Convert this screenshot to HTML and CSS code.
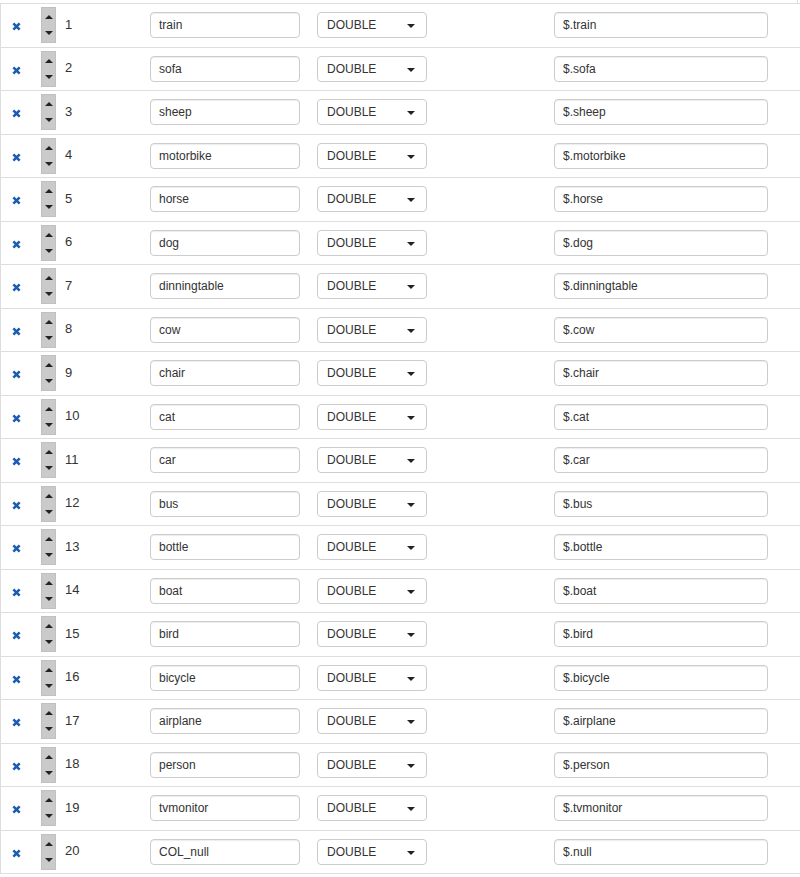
FILE: index.html
```html
<!DOCTYPE html>
<html lang="en">

<head>
    <meta charset="UTF-8">
    <title>Fields</title>
    <link rel="stylesheet" href="styles.css">
</head>

<body>
    <div class="top"></div>
    <div class="fields">
        <div class="row"><span class="del"><svg viewBox="0 0 10 10"><path d="M1.5 1.5L8.5 8.5M8.5 1.5L1.5 8.5"/></svg></span><span class="spin"><i class="up"></i><i class="down"></i></span><span class="num">1</span><span class="cell"><input class="name" value="train"></span><span class="cell"><span class="select">DOUBLE<b class="caret"></b></span></span><span class="cell"><input class="path" value="$.train"></span></div>
        <div class="row"><span class="del"><svg viewBox="0 0 10 10"><path d="M1.5 1.5L8.5 8.5M8.5 1.5L1.5 8.5"/></svg></span><span class="spin"><i class="up"></i><i class="down"></i></span><span class="num">2</span><span class="cell"><input class="name" value="sofa"></span><span class="cell"><span class="select">DOUBLE<b class="caret"></b></span></span><span class="cell"><input class="path" value="$.sofa"></span></div>
        <div class="row"><span class="del"><svg viewBox="0 0 10 10"><path d="M1.5 1.5L8.5 8.5M8.5 1.5L1.5 8.5"/></svg></span><span class="spin"><i class="up"></i><i class="down"></i></span><span class="num">3</span><span class="cell"><input class="name" value="sheep"></span><span class="cell"><span class="select">DOUBLE<b class="caret"></b></span></span><span class="cell"><input class="path" value="$.sheep"></span></div>
        <div class="row"><span class="del"><svg viewBox="0 0 10 10"><path d="M1.5 1.5L8.5 8.5M8.5 1.5L1.5 8.5"/></svg></span><span class="spin"><i class="up"></i><i class="down"></i></span><span class="num">4</span><span class="cell"><input class="name" value="motorbike"></span><span class="cell"><span class="select">DOUBLE<b class="caret"></b></span></span><span class="cell"><input class="path" value="$.motorbike"></span></div>
        <div class="row"><span class="del"><svg viewBox="0 0 10 10"><path d="M1.5 1.5L8.5 8.5M8.5 1.5L1.5 8.5"/></svg></span><span class="spin"><i class="up"></i><i class="down"></i></span><span class="num">5</span><span class="cell"><input class="name" value="horse"></span><span class="cell"><span class="select">DOUBLE<b class="caret"></b></span></span><span class="cell"><input class="path" value="$.horse"></span></div>
        <div class="row"><span class="del"><svg viewBox="0 0 10 10"><path d="M1.5 1.5L8.5 8.5M8.5 1.5L1.5 8.5"/></svg></span><span class="spin"><i class="up"></i><i class="down"></i></span><span class="num">6</span><span class="cell"><input class="name" value="dog"></span><span class="cell"><span class="select">DOUBLE<b class="caret"></b></span></span><span class="cell"><input class="path" value="$.dog"></span></div>
        <div class="row"><span class="del"><svg viewBox="0 0 10 10"><path d="M1.5 1.5L8.5 8.5M8.5 1.5L1.5 8.5"/></svg></span><span class="spin"><i class="up"></i><i class="down"></i></span><span class="num">7</span><span class="cell"><input class="name" value="dinningtable"></span><span class="cell"><span class="select">DOUBLE<b class="caret"></b></span></span><span class="cell"><input class="path" value="$.dinningtable"></span></div>
        <div class="row"><span class="del"><svg viewBox="0 0 10 10"><path d="M1.5 1.5L8.5 8.5M8.5 1.5L1.5 8.5"/></svg></span><span class="spin"><i class="up"></i><i class="down"></i></span><span class="num">8</span><span class="cell"><input class="name" value="cow"></span><span class="cell"><span class="select">DOUBLE<b class="caret"></b></span></span><span class="cell"><input class="path" value="$.cow"></span></div>
        <div class="row"><span class="del"><svg viewBox="0 0 10 10"><path d="M1.5 1.5L8.5 8.5M8.5 1.5L1.5 8.5"/></svg></span><span class="spin"><i class="up"></i><i class="down"></i></span><span class="num">9</span><span class="cell"><input class="name" value="chair"></span><span class="cell"><span class="select">DOUBLE<b class="caret"></b></span></span><span class="cell"><input class="path" value="$.chair"></span></div>
        <div class="row"><span class="del"><svg viewBox="0 0 10 10"><path d="M1.5 1.5L8.5 8.5M8.5 1.5L1.5 8.5"/></svg></span><span class="spin"><i class="up"></i><i class="down"></i></span><span class="num">10</span><span class="cell"><input class="name" value="cat"></span><span class="cell"><span class="select">DOUBLE<b class="caret"></b></span></span><span class="cell"><input class="path" value="$.cat"></span></div>
        <div class="row"><span class="del"><svg viewBox="0 0 10 10"><path d="M1.5 1.5L8.5 8.5M8.5 1.5L1.5 8.5"/></svg></span><span class="spin"><i class="up"></i><i class="down"></i></span><span class="num">11</span><span class="cell"><input class="name" value="car"></span><span class="cell"><span class="select">DOUBLE<b class="caret"></b></span></span><span class="cell"><input class="path" value="$.car"></span></div>
        <div class="row"><span class="del"><svg viewBox="0 0 10 10"><path d="M1.5 1.5L8.5 8.5M8.5 1.5L1.5 8.5"/></svg></span><span class="spin"><i class="up"></i><i class="down"></i></span><span class="num">12</span><span class="cell"><input class="name" value="bus"></span><span class="cell"><span class="select">DOUBLE<b class="caret"></b></span></span><span class="cell"><input class="path" value="$.bus"></span></div>
        <div class="row"><span class="del"><svg viewBox="0 0 10 10"><path d="M1.5 1.5L8.5 8.5M8.5 1.5L1.5 8.5"/></svg></span><span class="spin"><i class="up"></i><i class="down"></i></span><span class="num">13</span><span class="cell"><input class="name" value="bottle"></span><span class="cell"><span class="select">DOUBLE<b class="caret"></b></span></span><span class="cell"><input class="path" value="$.bottle"></span></div>
        <div class="row"><span class="del"><svg viewBox="0 0 10 10"><path d="M1.5 1.5L8.5 8.5M8.5 1.5L1.5 8.5"/></svg></span><span class="spin"><i class="up"></i><i class="down"></i></span><span class="num">14</span><span class="cell"><input class="name" value="boat"></span><span class="cell"><span class="select">DOUBLE<b class="caret"></b></span></span><span class="cell"><input class="path" value="$.boat"></span></div>
        <div class="row"><span class="del"><svg viewBox="0 0 10 10"><path d="M1.5 1.5L8.5 8.5M8.5 1.5L1.5 8.5"/></svg></span><span class="spin"><i class="up"></i><i class="down"></i></span><span class="num">15</span><span class="cell"><input class="name" value="bird"></span><span class="cell"><span class="select">DOUBLE<b class="caret"></b></span></span><span class="cell"><input class="path" value="$.bird"></span></div>
        <div class="row"><span class="del"><svg viewBox="0 0 10 10"><path d="M1.5 1.5L8.5 8.5M8.5 1.5L1.5 8.5"/></svg></span><span class="spin"><i class="up"></i><i class="down"></i></span><span class="num">16</span><span class="cell"><input class="name" value="bicycle"></span><span class="cell"><span class="select">DOUBLE<b class="caret"></b></span></span><span class="cell"><input class="path" value="$.bicycle"></span></div>
        <div class="row"><span class="del"><svg viewBox="0 0 10 10"><path d="M1.5 1.5L8.5 8.5M8.5 1.5L1.5 8.5"/></svg></span><span class="spin"><i class="up"></i><i class="down"></i></span><span class="num">17</span><span class="cell"><input class="name" value="airplane"></span><span class="cell"><span class="select">DOUBLE<b class="caret"></b></span></span><span class="cell"><input class="path" value="$.airplane"></span></div>
        <div class="row"><span class="del"><svg viewBox="0 0 10 10"><path d="M1.5 1.5L8.5 8.5M8.5 1.5L1.5 8.5"/></svg></span><span class="spin"><i class="up"></i><i class="down"></i></span><span class="num">18</span><span class="cell"><input class="name" value="person"></span><span class="cell"><span class="select">DOUBLE<b class="caret"></b></span></span><span class="cell"><input class="path" value="$.person"></span></div>
        <div class="row"><span class="del"><svg viewBox="0 0 10 10"><path d="M1.5 1.5L8.5 8.5M8.5 1.5L1.5 8.5"/></svg></span><span class="spin"><i class="up"></i><i class="down"></i></span><span class="num">19</span><span class="cell"><input class="name" value="tvmonitor"></span><span class="cell"><span class="select">DOUBLE<b class="caret"></b></span></span><span class="cell"><input class="path" value="$.tvmonitor"></span></div>
        <div class="row"><span class="del"><svg viewBox="0 0 10 10"><path d="M1.5 1.5L8.5 8.5M8.5 1.5L1.5 8.5"/></svg></span><span class="spin"><i class="up"></i><i class="down"></i></span><span class="num">20</span><span class="cell"><input class="name" value="COL_null"></span><span class="cell"><span class="select">DOUBLE<b class="caret"></b></span></span><span class="cell"><input class="path" value="$.null"></span></div>
    </div>
</body>

</html>
```

FILE: styles.css
```css
body {
    margin: 0px;
    background-color: #fff;
    font: 12px/16px "Liberation Sans", Arial, sans-serif;
    color: #333;
}

.top {
    width: 798px;
    height: 3px;
    border-right: 1px #ddd solid;
    box-sizing: border-box;
}

.fields {
    border-left: 1px #ddd solid;
    border-top: 1px #ddd solid;
}

.row {
    display: grid;
    grid-template-columns: 40px 20px 89px 167px 237px 214px;
    align-items: center;
    height: 43.5px;
    box-sizing: border-box;
    border-bottom: 1px #ddd solid;
}

.del {
    padding-left: 11px;
    padding-top: 3px;
}

.del svg {
    display: block;
    width: 9px;
    height: 9px;
    stroke: #1a5cb0;
    stroke-width: 2.8;
}

.spin {
    display: flex;
    flex-direction: column;
    justify-content: space-between;
    align-items: center;
    width: 15px;
    height: 36px;
    padding: 7px 0px;
    box-sizing: border-box;
    background-color: #cacaca;
    border: 1px #c0c0c0 solid;
}

.spin i {
    width: 0px;
    height: 0px;
    border-left: 4px transparent solid;
    border-right: 4px transparent solid;
}

.spin .up {
    border-bottom: 4px #222 solid;
}

.spin .down {
    border-top: 4px #222 solid;
}

.num {
    padding-left: 4px;
    padding-bottom: 1px;
    font-size: 13px;
}

.cell {
    display: flex;
}

input,
.select {
    height: 26px;
    box-sizing: border-box;
    border: 1px #ccc solid;
    border-radius: 4px;
    box-shadow: inset 0 1px 1px rgba(0, 0, 0, .075);
    font: 12px "Liberation Sans", Arial, sans-serif;
    color: #333;
    background-color: #fff;
}

input {
    padding: 0px 8px;
}

.name {
    width: 150px;
}

.path {
    width: 214px;
}

.select {
    position: relative;
    width: 110px;
    padding: 5px 9px 0px;
    line-height: 14px;
    box-shadow: none;
}

.caret {
    position: absolute;
    top: 11px;
    right: 11px;
    border-left: 4px transparent solid;
    border-right: 4px transparent solid;
    border-top: 4px #222 solid;
}
```
